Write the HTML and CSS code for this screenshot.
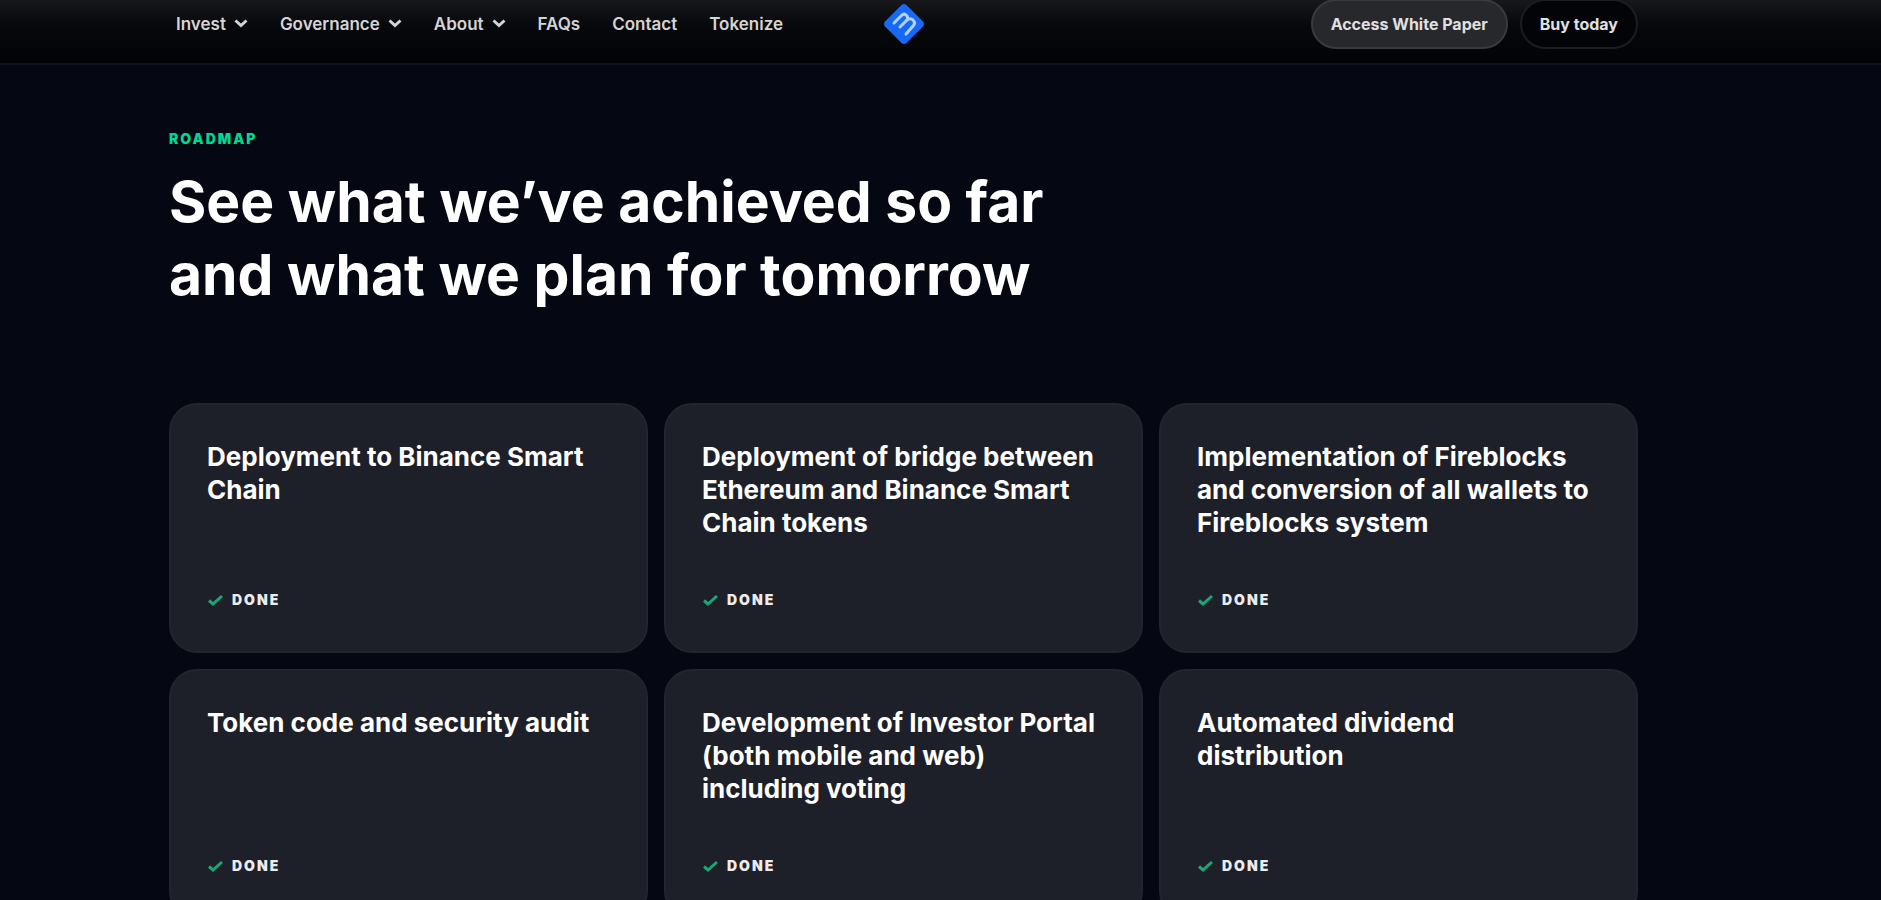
FILE: index.html
```
<!DOCTYPE html>
<html lang="en">
<head>
    <meta charset="UTF-8">
    <meta name="viewport" content="width=device-width, initial-scale=1.0">
    <title>Roadmap</title>
    <link rel="stylesheet" href="styles.css">
</head>
<body>
    <!-- icons used more than once -->
    <svg class="sprite" aria-hidden="true">
        <symbol id="check" viewBox="0 0 17 13">
            <path d="M2 6.500l4 3.500 9-8" fill="none" stroke="currentColor" stroke-width="3"/>
        </symbol>
        <symbol id="chevron" viewBox="0 0 14 9">
            <path d="M1.500 1.500l5.500 5 5.500-5" fill="none" stroke="currentColor" stroke-width="3"/>
        </symbol>
    </svg>

    <header class="header">
        <nav class="nav">
            <button class="nav-item" type="button">Invest <svg class="chevron"><use href="#chevron"/></svg></button>
            <button class="nav-item" type="button">Governance <svg class="chevron"><use href="#chevron"/></svg></button>
            <button class="nav-item" type="button">About <svg class="chevron"><use href="#chevron"/></svg></button>
            <a class="nav-item" href="#">FAQs</a>
            <a class="nav-item" href="#">Contact</a>
            <a class="nav-item" href="#">Tokenize</a>
        </nav>
        <a class="logo" href="#" aria-label="Home">
            <svg viewBox="0 0 42 42" width="42" height="42">
                <path d="M18.500 2 Q21 0 23.500 2 L40 18.500 Q42 21 40 23.500 L23.500 40 Q21 42 18.500 40 L2 23.500 Q0 21 2 18.500 Z" fill="#1668f5"/>
                <path d="M11 20l8-8q3-2 5 1t-1 5l-6 6M23 18q4-4 7-1t0 6l-7 8" fill="none" stroke="#b4d2ff" stroke-width="3" stroke-linecap="round" stroke-linejoin="round"/>
            </svg>
        </a>
        <div class="actions">
            <a class="btn btn-filled" href="#">Access White Paper</a>
            <a class="btn" href="#">Buy today</a>
        </div>
    </header>

    <main class="roadmap">
        <p class="eyebrow">Roadmap</p>
        <h1>See what we’ve achieved so far<br>and what we plan for tomorrow</h1>

        <div class="cards">
            <article class="card">
                <h2>Deployment to Binance Smart Chain</h2>
                <p class="status"><svg class="check"><use href="#check"/></svg>Done</p>
            </article>
            <article class="card">
                <h2>Deployment of bridge between Ethereum and Binance Smart Chain tokens</h2>
                <p class="status"><svg class="check"><use href="#check"/></svg>Done</p>
            </article>
            <article class="card">
                <h2>Implementation of Fireblocks and conversion of all wallets to Fireblocks system</h2>
                <p class="status"><svg class="check"><use href="#check"/></svg>Done</p>
            </article>
            <article class="card">
                <h2>Token code and security audit</h2>
                <p class="status"><svg class="check"><use href="#check"/></svg>Done</p>
            </article>
            <article class="card">
                <h2>Development of Investor Portal (both mobile and web) including voting</h2>
                <p class="status"><svg class="check"><use href="#check"/></svg>Done</p>
            </article>
            <article class="card">
                <h2>Automated dividend distribution</h2>
                <p class="status"><svg class="check"><use href="#check"/></svg>Done</p>
            </article>
        </div>
    </main>
</body>
</html>
```
FILE: styles.css
```
* {
    box-sizing: border-box;
}
html {
    background: #050812;
}
body {
    margin: 0;
    font-family: Inter, "Liberation Sans", sans-serif;
    color: #fff;
}
.sprite {
    display: none;
}

/* Header */
.header {
    display: grid;
    grid-template-columns: 1fr auto 1fr;
    grid-template-rows: 47px;
    align-items: center;
    height: 65px;
    padding: 0 243px 0 169px;
    background: linear-gradient(#17181c, #07080b 40%, #020306);
    border-bottom: 2px solid #10131c;
}
.nav {
    display: flex;
    align-items: center;
    gap: 32px;
    padding-left: 7px;
}
.nav-item {
    display: flex;
    align-items: center;
    gap: 8px;
    padding: 0;
    border: none;
    background: none;
    font: 600 17px/24px Inter, "Liberation Sans", sans-serif;
    color: #d4d4d5;
    text-decoration: none;
    cursor: pointer;
}
.chevron {
    width: 14px;
    height: 9px;
}
.logo {
    display: block;
    height: 42px;
}
.actions {
    display: flex;
    justify-content: flex-end;
    gap: 12px;
}
.btn {
    padding: 12px 18px;
    border: 2px solid #1c1d20;
    border-radius: 26px;
    background: #030407;
    font-size: 16px;
    font-weight: 700;
    line-height: 22px;
    color: #e0e0e1;
    text-decoration: none;
    white-space: nowrap;
}
.btn-filled {
    border-color: #393a3d;
    background: #27282b;
}

/* Roadmap */
.roadmap {
    padding: 64px 243px 64px 169px;
}
.eyebrow {
    margin: 0 0 16px;
    font-size: 14px;
    font-weight: 900;
    line-height: 20px;
    letter-spacing: 2px;
    text-transform: uppercase;
    color: #00d690;
}
h1 {
    margin: 0;
    font-size: 57px;
    font-weight: 700;
    line-height: 73px;
}
.cards {
    display: grid;
    grid-template-columns: repeat(3, 1fr);
    gap: 16px;
    margin-top: 92px;
}
.card {
    display: flex;
    flex-direction: column;
    justify-content: space-between;
    min-height: 250px;
    padding: 35px 36px 39px;
    border: 2px solid #22252e;
    border-radius: 28px;
    background: #1e2029;
}
.card h2 {
    margin: 0;
    font-size: 26px;
    font-weight: 700;
    line-height: 33px;
}
.status {
    display: flex;
    align-items: center;
    gap: 8px;
    margin: 0;
    font-size: 14px;
    font-weight: 900;
    line-height: 24px;
    letter-spacing: 2px;
    text-transform: uppercase;
    color: #ececee;
}
.check {
    width: 17px;
    height: 13px;
    color: #18a878;
}
```
